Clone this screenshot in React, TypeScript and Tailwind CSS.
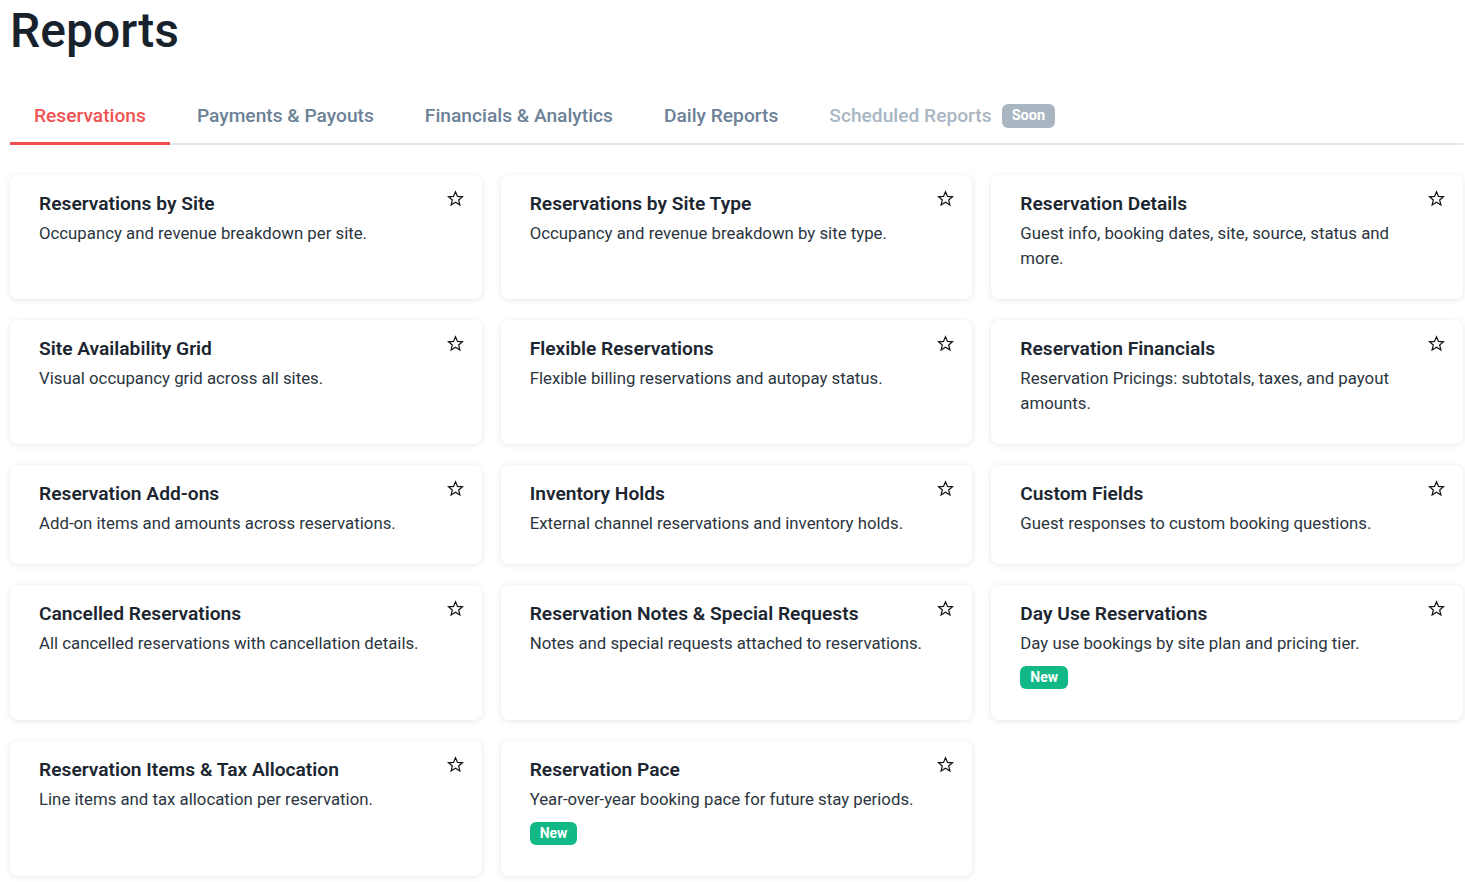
import { useState } from "react"

type Report = {
  title: string
  description: string
  isNew?: boolean
}

const tabs = [
  { label: "Reservations" },
  { label: "Payments & Payouts" },
  { label: "Financials & Analytics" },
  { label: "Daily Reports" },
  { label: "Scheduled Reports", soon: true },
]

const reports: Report[] = [
  { title: "Reservations by Site", description: "Occupancy and revenue breakdown per site." },
  { title: "Reservations by Site Type", description: "Occupancy and revenue breakdown by site type." },
  { title: "Reservation Details", description: "Guest info, booking dates, site, source, status and more." },
  { title: "Site Availability Grid", description: "Visual occupancy grid across all sites." },
  { title: "Flexible Reservations", description: "Flexible billing reservations and autopay status." },
  { title: "Reservation Financials", description: "Reservation Pricings: subtotals, taxes, and payout amounts." },
  { title: "Reservation Add-ons", description: "Add-on items and amounts across reservations." },
  { title: "Inventory Holds", description: "External channel reservations and inventory holds." },
  { title: "Custom Fields", description: "Guest responses to custom booking questions." },
  { title: "Cancelled Reservations", description: "All cancelled reservations with cancellation details." },
  { title: "Reservation Notes & Special Requests", description: "Notes and special requests attached to reservations." },
  { title: "Day Use Reservations", description: "Day use bookings by site plan and pricing tier.", isNew: true },
  { title: "Reservation Items & Tax Allocation", description: "Line items and tax allocation per reservation." },
  { title: "Reservation Pace", description: "Year-over-year booking pace for future stay periods.", isNew: true },
]

function StarIcon({ filled }: { filled: boolean }) {
  return (
    <svg width="17" height="17" viewBox="0 0 24 24" className="block">
      <polygon
        points="12,2.5 14.8,9.1 21.9,9.6 16.5,14.2 18.2,21.2 12,17.4 5.8,21.2 7.5,14.2 2.1,9.6 9.2,9.1"
        fill={filled ? "#111" : "none"}
        stroke="#111"
        strokeWidth="1.7"
        strokeLinejoin="miter"
      />
    </svg>
  )
}

function ReportCard({ report }: { report: Report }) {
  const [starred, setStarred] = useState(false)

  return (
    <div className="relative bg-white rounded-lg shadow-[0_1px_6px_rgba(15,23,42,0.10)] pt-[14px] pb-[28px] pl-[29px] pr-10 cursor-pointer">
      <h3 className="text-[19.2px] leading-[30px] font-semibold text-[#1c2631]">{report.title}</h3>
      <p className="mt-[2px] text-[16.8px] leading-[25px] text-[#2b3540]">{report.description}</p>
      {report.isNew && (
        <span className="inline-block mt-[10px] mb-[3px] px-2.5 rounded-md bg-[#12b886] text-white text-[14px] leading-[23px] font-bold">
          New
        </span>
      )}
      <button onClick={() => setStarred(!starred)} className="absolute top-[15px] right-[18px]">
        <StarIcon filled={starred} />
      </button>
    </div>
  )
}

export default function App() {
  const [activeTab, setActiveTab] = useState(0)

  return (
    <div className="min-h-screen bg-white pl-[10px] pr-[2px] font-['Roboto',sans-serif]">
      <h1 className="pt-[7px] text-[48px] leading-[48px] font-medium text-[#17222d]">Reports</h1>

      <div className="mt-[35px] flex gap-[3px] border-b-2 border-[#e2e8f0]">
        {tabs.map((tab, i) => (
          <button
            key={tab.label}
            onClick={() => !tab.soon && setActiveTab(i)}
            className={
              i === activeTab
                ? "-mb-[2px] px-6 py-3 border-b-[3px] border-[#f04e4e] text-[19.2px] leading-[28px] font-medium text-[#f05252]"
                : tab.soon
                ? "-mb-[2px] px-6 py-3 border-b-[3px] border-transparent text-[19.2px] leading-[28px] font-medium text-[#a8b6c3] flex items-center gap-2.5"
                : "-mb-[2px] px-6 py-3 border-b-[3px] border-transparent text-[19.2px] leading-[28px] font-medium text-[#6c8196]"
            }
          >
            {tab.label}
            {tab.soon && (
              <span className="px-[10px] rounded-md bg-[#a9b6c2] text-white text-[14.5px] leading-[24px] font-bold">Soon</span>
            )}
          </button>
        ))}
      </div>

      <div className="mt-[30px] grid grid-cols-3 gap-x-[19px] gap-y-[21px] pb-4">
        {reports.map((r) => (
          <ReportCard key={r.title} report={r} />
        ))}
      </div>
    </div>
  )
}
